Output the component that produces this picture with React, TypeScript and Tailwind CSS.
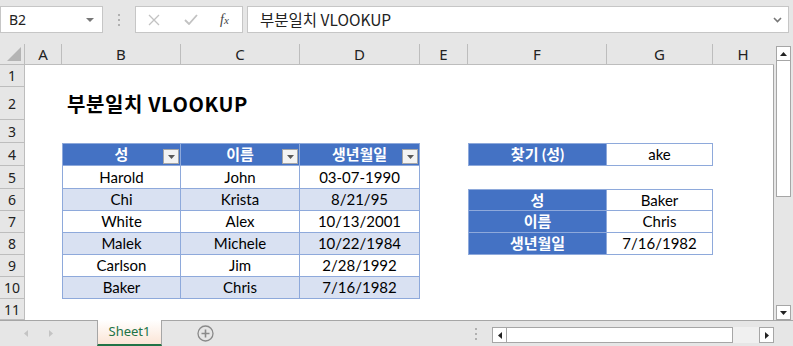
import React from "react";

const COLS = [37, 119, 119, 120, 48, 139, 106, 60]; // A..H
const LETTERS = ["A", "B", "C", "D", "E", "F", "G", "H"];
const ROW_H = [22, 33, 23, 23, 23, 22, 22, 22, 22, 22, 21];

const people = [
  ["Harold", "John", "03-07-1990"],
  ["Chi", "Krista", "8/21/95"],
  ["White", "Alex", "10/13/2001"],
  ["Malek", "Michele", "10/22/1984"],
  ["Carlson", "Jim", "2/28/1992"],
  ["Baker", "Chris", "7/16/1982"],
];

const cellFont = "font-['Lato','Noto_Sans_CJK_KR',sans-serif] text-[15px]";
const uiFont = "font-['Noto_Sans','Open_Sans',sans-serif]";

function FilterBtn() {
  return (
    <span className="absolute right-[1px] bottom-[1px] flex h-[15px] w-[16px] items-center justify-center border border-[#a6a6a6] bg-[#f3f3f3]">
      <svg width="7" height="4" viewBox="0 0 7 4">
        <path d="M0 0h7L3.5 4z" fill="#595959" />
      </svg>
    </span>
  );
}

function TableCell({ row, col }: { row: number; col: number }) {
  // row: 4..10, col: 1..3 (B..D)
  const w = COLS[col];
  const isHead = row === 4;
  const band = !isHead && row % 2 === 0;
  const text = isHead ? ["성", "이름", "생년월일"][col - 1] : people[row - 5][col - 1];
  return (
    <div
      style={{ width: w }}
      className={`relative flex shrink-0 items-center justify-center border-b border-r border-[#8ea9db] ${
        col === 1 ? "border-l" : ""
      } ${isHead ? "border-t bg-[#4472c4] font-bold text-white" : band ? "bg-[#d9e1f2] text-black" : "bg-white text-black"}`}
    >
      <span className="leading-none">{text}</span>
      {isHead && <FilterBtn />}
    </div>
  );
}

function LookupCell({ label, value, top }: { label: string; value: string; top?: boolean }) {
  return (
    <>
      <div
        style={{ width: COLS[5] }}
        className={`flex shrink-0 items-center justify-center border-b border-l border-r border-[#8ea9db] bg-[#4472c4] font-bold text-white ${
          top ? "border-t" : ""
        }`}
      >
        <span className="leading-none">{label}</span>
      </div>
      <div
        style={{ width: COLS[6] }}
        className={`flex shrink-0 items-center justify-center border-b border-r border-[#8ea9db] bg-white text-black ${
          top ? "border-t" : ""
        }`}
      >
        <span className="leading-none">{value}</span>
      </div>
    </>
  );
}

function Row({ r }: { r: number }) {
  const h = ROW_H[r - 1];
  const cells: React.ReactNode[] = [];
  let c = 0;
  while (c < COLS.length) {
    if (r >= 4 && r <= 10 && c >= 1 && c <= 3) {
      cells.push(<TableCell key={c} row={r} col={c} />);
      c++;
      continue;
    }
    if (c === 5 && r === 4) {
      cells.push(<LookupCell key={c} label="찾기 (성)" value="ake" top />);
      c += 2;
      continue;
    }
    if (c === 5 && r >= 6 && r <= 8) {
      const lk = [
        ["성", "Baker"],
        ["이름", "Chris"],
        ["생년월일", "7/16/1982"],
      ][r - 6];
      cells.push(<LookupCell key={c} label={lk[0]} value={lk[1]} top={r === 6} />);
      c += 2;
      continue;
    }
    if (r === 2 && c === 1) {
      cells.push(
        <div
          key={c}
          style={{ width: COLS[c] }}
          className="relative flex shrink-0 items-end overflow-visible pb-[6px] pl-[5px]"
        >
          <span className="whitespace-nowrap font-['Noto_Sans_CJK_KR',sans-serif] text-[20px] font-bold leading-none tracking-[0.6px] text-black">
            부분일치 VLOOKUP
          </span>
        </div>
      );
      c++;
      continue;
    }
    cells.push(<div key={c} style={{ width: COLS[c] }} className="shrink-0" />);
    c++;
  }
  return (
    <div style={{ height: h }} className="flex">
      <div
        className={`flex w-[25px] shrink-0 items-center justify-center border-b border-r border-[#bdbdbd] bg-[#e6e6e6] text-[14px] text-[#222] ${uiFont}`}
      >
        {r}
      </div>
      <div className={`flex ${cellFont}`}>{cells}</div>
    </div>
  );
}

export default function App() {
  return (
    <div className="flex h-[346px] w-[793px] flex-col overflow-hidden bg-[#e6e6e6] select-none">
      {/* formula bar */}
      <div className={`flex h-[44px] shrink-0 items-start pt-[6px] ${uiFont}`}>
        <div className="flex h-[27px] w-[103px] items-center justify-between border border-[#c6c6c6] bg-white pl-[8px] pr-[8px]">
          <span className="text-[14px] text-[#222]">B2</span>
          <svg width="8" height="4" viewBox="0 0 8 4">
            <path d="M0 0h8L4 4z" fill="#777" />
          </svg>
        </div>
        <div className="flex h-[27px] w-[32px] flex-col items-center justify-center gap-[3px]">
          <span className="h-[2px] w-[2px] bg-[#b0b0b0]" />
          <span className="h-[2px] w-[2px] bg-[#b0b0b0]" />
          <span className="h-[2px] w-[2px] bg-[#b0b0b0]" />
        </div>
        <div className="flex h-[27px] w-[108px] items-center border border-[#c6c6c6] bg-white">
          <svg className="ml-[12px]" width="12" height="12" viewBox="0 0 12 12">
            <path d="M1 1l10 10M11 1L1 11" stroke="#c2c2c2" strokeWidth="1.3" />
          </svg>
          <svg className="ml-[24px]" width="14" height="11" viewBox="0 0 14 11">
            <path d="M1 6l4 4 8-9" stroke="#c2c2c2" strokeWidth="1.8" fill="none" />
          </svg>
          <span className="ml-[22px] font-['Liberation_Serif',serif] text-[14px] italic text-[#444]">
            f<span className="text-[11px]">x</span>
          </span>
        </div>
        <div className="ml-[4px] flex h-[27px] w-[542px] items-center justify-between border border-[#c6c6c6] bg-white pl-[12px] pr-[6px]">
          <span className="font-['Noto_Sans_CJK_KR',sans-serif] text-[15.5px] text-[#222]">부분일치 VLOOKUP</span>
          <svg width="9" height="6" viewBox="0 0 9 6">
            <path d="M1 1l3.5 3.5L8 1" stroke="#777" strokeWidth="1.6" fill="none" />
          </svg>
        </div>
      </div>

      {/* sheet + vertical scrollbar */}
      <div className="flex h-[276px] shrink-0">
        <div className="flex w-[774px] shrink-0 flex-col">
          {/* column headers */}
          <div className="flex h-[21px] shrink-0 border-b border-[#bdbdbd]">
            <div className="relative w-[25px] shrink-0 border-r border-[#bdbdbd]">
              <svg className="absolute bottom-[3px] right-[3px]" width="14" height="14" viewBox="0 0 14 14">
                <path d="M14 0V14H0z" fill="#b4b4b4" />
              </svg>
            </div>
            {LETTERS.map((l, i) => (
              <div
                key={l}
                style={{ width: COLS[i] }}
                className={`flex shrink-0 items-center justify-center text-[15px] text-[#222] ${uiFont} ${
                  i < LETTERS.length - 1 ? "border-r border-[#bdbdbd]" : ""
                }`}
              >
                {l}
              </div>
            ))}
          </div>
          {/* grid body */}
          <div className="flex-1 border-r border-[#a6a6a6] bg-white">
            {ROW_H.map((_, i) => (
              <Row key={i} r={i + 1} />
            ))}
          </div>
        </div>
        {/* vertical scrollbar */}
        <div className="ml-[2px] flex w-[15px] shrink-0 flex-col pt-[2px]">
          <div className="flex h-[15px] items-center justify-center border border-[#a6a6a6] bg-white">
            <svg width="7" height="4" viewBox="0 0 7 4">
              <path d="M3.5 0L7 4H0z" fill="#222" />
            </svg>
          </div>
          <div className="h-[136px] border border-t-0 border-[#a6a6a6] bg-white" />
          <div className="flex-1" />
          <div className="flex h-[15px] items-center justify-center border border-[#a6a6a6] bg-white">
            <svg width="7" height="4" viewBox="0 0 7 4">
              <path d="M0 0h7L3.5 4z" fill="#222" />
            </svg>
          </div>
        </div>
      </div>

      {/* sheet tabs + horizontal scrollbar */}
      <div className="flex h-[26px] shrink-0 border-t border-[#a6a6a6]">
        <div className="flex w-[97px] shrink-0 items-center gap-[21px] pl-[24px]">
          <svg width="4" height="7" viewBox="0 0 4 7">
            <path d="M4 0v7L0 3.5z" fill="#c4c4c4" />
          </svg>
          <svg width="4" height="7" viewBox="0 0 4 7">
            <path d="M0 0v7l4-3.5z" fill="#c4c4c4" />
          </svg>
        </div>
        <div className="-mt-px flex h-[26px] w-[65px] shrink-0 items-center justify-center border-x border-[#a6a6a6] border-b-2 border-b-[#217346] bg-gradient-to-b from-white to-[#fbe5d6]">
          <span className={`text-[13px] text-[#217346] ${uiFont}`}>Sheet1</span>
        </div>
        <div className="flex w-[86px] shrink-0 items-center justify-center">
          <svg width="17" height="17" viewBox="0 0 17 17">
            <circle cx="8.5" cy="8.5" r="7.5" fill="none" stroke="#8a8a8a" strokeWidth="1.3" />
            <path d="M8.5 4.5v8M4.5 8.5h8" stroke="#8a8a8a" strokeWidth="1.6" />
          </svg>
        </div>
        <div className="flex w-[244px] shrink-0 items-center justify-end pr-[15px]">
          <div className="flex flex-col gap-[3px]">
            <span className="h-[2px] w-[2px] bg-[#b0b0b0]" />
            <span className="h-[2px] w-[2px] bg-[#b0b0b0]" />
            <span className="h-[2px] w-[2px] bg-[#b0b0b0]" />
          </div>
        </div>
        <div className="mt-[6px] flex h-[16px] w-[282px] shrink-0">
          <div className="flex w-[15px] items-center justify-center border border-[#a6a6a6] bg-white">
            <svg width="4" height="7" viewBox="0 0 4 7">
              <path d="M4 0v7L0 3.5z" fill="#222" />
            </svg>
          </div>
          <div className="w-[226px] border border-l-0 border-[#a6a6a6] bg-white" />
          <div className="flex-1 bg-[#f0f0f0]" />
          <div className="flex w-[15px] items-center justify-center border border-[#a6a6a6] bg-white">
            <svg width="4" height="7" viewBox="0 0 4 7">
              <path d="M0 0v7l4-3.5z" fill="#222" />
            </svg>
          </div>
        </div>
      </div>
    </div>
  );
}
